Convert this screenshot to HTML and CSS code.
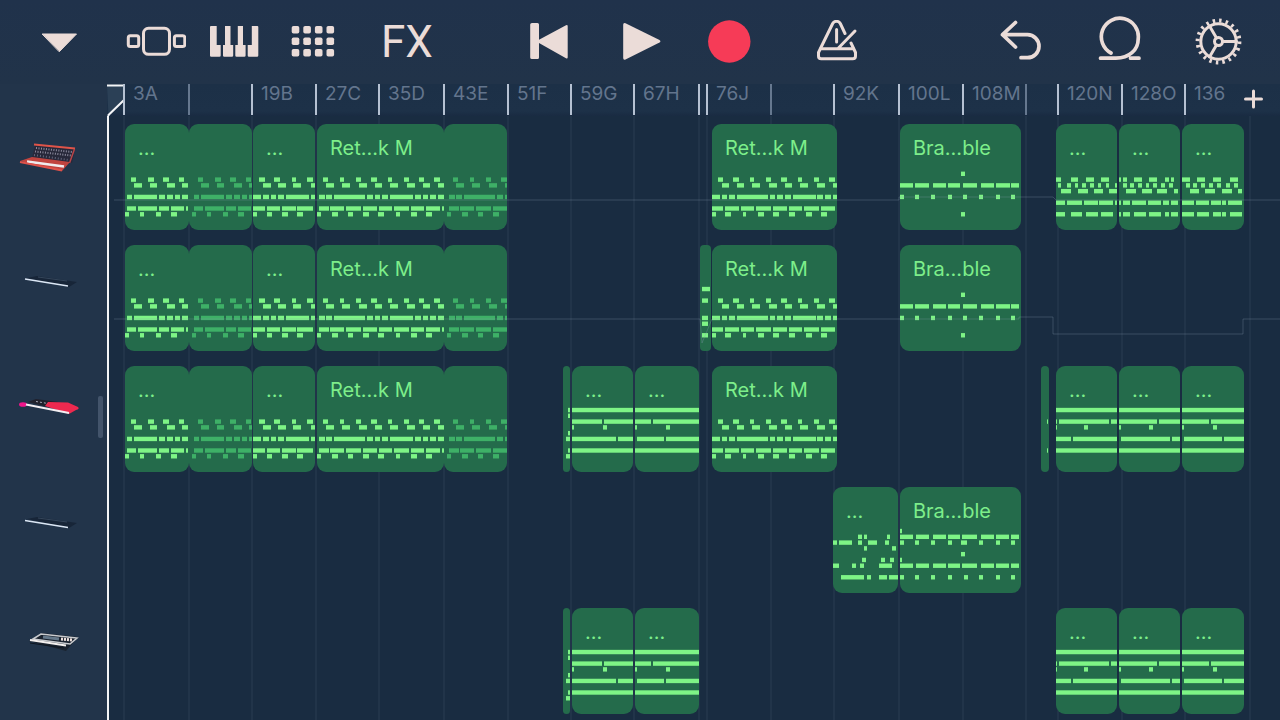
FILE: index.html
```html
<!DOCTYPE html>
<html lang="en">
<head>
<meta charset="utf-8">
<meta name="viewport" content="width=device-width, initial-scale=1">
<title>Song arranger</title>
<link rel="stylesheet" href="styles.css">
</head>
<body>
<div class="app">
  <header class="toolbar">
    <div class="group group-left">
      <button class="tool tool-menu" type="button" aria-label="Menu">
        <svg class="icon" width="40" height="44" viewBox="39 20 40 44"><path class="solid" d="M42.500 34h34l-17 17.500z"/></svg>
      </button>
      <button class="tool" type="button" aria-label="Rack">
        <svg class="icon" width="60" height="44" viewBox="126 20 60 44"><rect x="143.500" y="28.300" width="26" height="26" rx="5"/><rect x="128.300" y="35.800" width="10.400" height="10.800" rx="2"/><rect x="174.400" y="35.800" width="10.400" height="10.800" rx="2"/></svg>
      </button>
      <button class="tool" type="button" aria-label="Keyboard">
        <svg class="icon" width="50" height="44" viewBox="209 20 50 44"><g class="flat"><path d="M211 26h5.700v19h4v10.500q0 1.300-1.300 1.300h-8.100q-1.300 0-1.300-1.300V27q0-1 1-1z"/><path d="M225 26h5.500v19h2.700v10.500q0 1.300-1.300 1.300h-7.600q-1.300 0-1.300-1.300V45h2z"/><path d="M237.800 26h5.200v19h2.600v10.500q0 1.300-1.300 1.300h-7.700q-1.300 0-1.300-1.300V45h2.500z"/><path d="M251.800 26h5.500q1 0 1 1v28.500q0 1.300-1.300 1.300h-8q-1.300 0-1.300-1.300V45h4.100z"/></g></svg>
      </button>
      <button class="tool" type="button" aria-label="Pads">
        <svg class="icon" width="46" height="44" viewBox="289 20 46 44"><g class="flat" id="pads"></g></svg>
      </button>
      <button class="tool tool-fx" type="button">FX</button>
    </div>
    <div class="group group-transport">
      <button class="tool" type="button" aria-label="Return to start">
        <svg class="icon" width="44" height="44" viewBox="527 20 44 44"><path class="flat" d="M532 23h5.500q1.500 0 1.500 1.500v15.200l27-14.500q1.700-.7 1.700 1v31q0 1.700-1.700 1L539 42.900v14.600q0 1.500-1.500 1.500H532q-1.800 0-1.800-1.500v-33q0-1.500 1.800-1.500z"/></svg>
      </button>
      <button class="tool" type="button" aria-label="Play">
        <svg class="icon" width="44" height="44" viewBox="617 20 44 44"><path class="flat" d="M625.500 23.200l34 16.800q1.800 1.300 0 2.600l-34 17q-2.300.8-2.300-1.500V24.700q0-2.300 2.300-1.500z"/></svg>
      </button>
      <button class="tool" type="button" aria-label="Record">
        <svg class="icon" width="44" height="44" viewBox="707 20 44 44"><circle class="record" cx="729.300" cy="41.500" r="21.200"/></svg>
      </button>
      <button class="tool tool-metronome" type="button" aria-label="Metronome">
        <svg class="icon" width="44" height="44" viewBox="815 20 44 44"><path d="M845 33.500l-4.700-10q-1.200-2.200-3.800-2.200t-3.800 2.200L818.500 52.500v3.500q0 2.800 2.800 2.800h31.400q2.800 0 2.800-2.800v-3.500L851 43"/><path d="M820.500 48.800h33M836.600 29.500V42M855 31l-17 17.500"/></svg>
      </button>
    </div>
    <div class="group group-right">
      <button class="tool" type="button" aria-label="Undo">
        <svg class="icon icon-round" width="44" height="44" viewBox="999 20 44 44"><path d="M1015.500 22.500L1002.500 34.700l13 12.300M1003 34.700h24.500a11.500 11.500 0 0 1 0 23h-6.500"/></svg>
      </button>
      <button class="tool" type="button" aria-label="Loop">
        <svg class="icon icon-round" width="44" height="52" viewBox="1097 16 44 52"><path d="M1111 53A18.500 18.500 0 1 1 1138.200 39C1138.200 50 1129 58.200 1116 58.200H1100.500M1130.500 58.200h8.500"/></svg>
      </button>
      <button class="tool" type="button" aria-label="Settings">
        <svg class="icon" width="50" height="48" viewBox="1192 18 50 48"><circle cx="1218.500" cy="41.500" r="17.700"/><circle class="teeth" cx="1218.500" cy="41.500" r="20.900"/><circle cx="1218.500" cy="41.500" r="4"/><path d="M1222.500 41.500h14M1216.500 38l-7-12M1216.500 45l-7 12"/></svg>
      </button>
    </div>
  </header>

  <aside class="instruments" aria-label="Instruments">
    <button class="instrument" type="button" aria-label="Modular synthesizer">
      <svg width="70" height="64" viewBox="15 126 70 64"><path fill="#27283a" d="M35 145l40 4-3 14-40-5z"/><path stroke="#df5449" stroke-width="2" d="M34 144.500l41 4"/><path stroke="#b8464a" stroke-width="1.500" d="M74.500 149l-5 14"/><path stroke="#8c8b9e" stroke-width="2" stroke-dasharray="1 1.500" d="M36 148l36 4M35 151.500l36 4"/><path stroke="#62667c" stroke-width="2" stroke-dasharray="1 2" d="M34 155l35 5"/><path fill="#c1443f" d="M20 161l12-4 38 5-8 9z"/><path stroke="#efebed" stroke-width="2.500" d="M27 161.500l37 5"/><path stroke="#df514a" stroke-width="2" d="M20 162l42 8.500"/></svg>
    </button>
    <button class="instrument" type="button" aria-label="Slim keyboard 1">
      <svg width="70" height="64" viewBox="15 247 70 64"><path fill="#172538" d="M27 278l10-2 40 6-8 5z"/><path stroke="#dce7f5" stroke-width="1.500" d="M25 279l43 7"/><path stroke="#34455a" d="M38 277l29 4"/></svg>
    </button>
    <button class="instrument" type="button" aria-label="Red stage keyboard">
      <svg width="70" height="64" viewBox="15 368 70 64"><path fill="#20212c" d="M28 402l8-3 22 3-6 6z"/><path fill="#ed294f" d="M48 402l20 .5 10 4.500q2 2-2 3l-7 4-24-8z"/><ellipse fill="#ef168b" cx="23" cy="404.500" rx="4" ry="2.300"/><path stroke="#f4eff2" stroke-width="2" d="M26 404.500l43 8.500"/><path stroke="#a5a7b4" stroke-dasharray="2 2" d="M36 401.500l12 2"/></svg>
    </button>
    <button class="instrument" type="button" aria-label="Slim keyboard 2">
      <svg width="70" height="64" viewBox="15 489 70 64"><path fill="#172538" d="M27 519l10-2 40 6-8 5z"/><path stroke="#dce7f5" stroke-width="1.500" d="M25 520.500l43 7"/><path stroke="#34455a" d="M38 518l29 4"/></svg>
    </button>
    <button class="instrument" type="button" aria-label="Workstation">
      <svg width="70" height="64" viewBox="15 610 70 64"><path fill="#1a222e" d="M29 641l13-8 36 4-12 14z"/><path stroke="#c9cbcf" stroke-width="1.500" fill="none" d="M33 639l8-5 36 4-7 6z"/><path stroke="#65788a" stroke-width="3" d="M43 637l16 2"/><path stroke="#efe2df" stroke-width="3" stroke-dasharray="2 1" d="M61 639l12 1"/><path stroke="#f3efee" stroke-width="2" d="M30 640l36 5.500"/><path stroke="#0e1621" d="M30 643l34 5"/></svg>
    </button>
    <div class="scroll-handle"></div>
  </aside>

  <div class="ruler" id="ruler">
    <svg class="playhead" width="18" height="32" viewBox="0 0 18 32"><path d="M0 1.500H17V16L1.500 31V32"/></svg>
  </div>

  <main class="lanes" id="lanes">
    <svg class="gridlines" id="gridlines" width="100%" height="100%"></svg>
    <svg class="automation" width="100%" height="100%"><path d="M5 84H790V81H944L947 84H1400M5 203H591L593 227L603 203H910V201H944V218H1134V203H1400"/></svg>
  </main>
</div>
<script src="script.js"></script>
</body>
</html>
```
FILE: styles.css
```css
* {
  box-sizing: border-box;
}

body {
  margin: 0;
  background: #192c41;
  font-family: Inter, "Liberation Sans", sans-serif;
}

button {
  padding: 0;
  border: 0;
  background: none;
  font: inherit;
  cursor: pointer;
}

.app {
  display: grid;
  grid-template-columns: 107px 1fr;
  grid-template-rows: 84px 32px 1fr;
  height: 100vh;
  overflow: hidden;
}

.toolbar {
  grid-column: 1 / -1;
  display: flex;
  padding: 0 14px 0 20px;
  background: linear-gradient(#20324b, #213349);
}

.group {
  display: flex;
}

.group-left {
  margin-right: 41px;
}

.group-right {
  margin-left: auto;
}

.tool {
  display: flex;
  align-items: center;
  justify-content: center;
  width: 78px;
  color: #ebdcd8;
}

.tool-menu {
  margin-right: 19px;
}

.tool-fx {
  width: 112px;
  font-family: Roboto, sans-serif;
  font-size: 44px;
  font-weight: 400;
}

.group-transport .tool {
  width: 90px;
}

.group-transport .tool-metronome {
  width: 126px;
}

.group-right .tool {
  width: 98px;
}

.icon {
  fill: none;
  stroke: #ebdcd8;
  stroke-width: 3;
  stroke-linejoin: round;
  stroke-linecap: round;
}

.icon-round {
  stroke-width: 3.700;
}

.icon .solid {
  fill: #ebdcd8;
  stroke-width: 1;
}

.icon .flat {
  fill: #ebdcd8;
  stroke: none;
}

.icon .record {
  fill: #f63b57;
  stroke: none;
}

.icon .teeth {
  stroke-width: 4;
  stroke-linecap: butt;
  stroke-dasharray: 2.500 4.066;
}

.instruments {
  position: relative;
  grid-row: 2 / 4;
  display: flex;
  flex-direction: column;
  padding-top: 32px;
  background: #22344a;
}

.instrument {
  display: flex;
  flex: 0 0 121px;
  align-items: flex-start;
  padding: 10px 0 0 15px;
}

.scroll-handle {
  position: absolute;
  top: 312px;
  right: 4px;
  width: 5px;
  height: 42px;
  border-radius: 2px;
  background: #43546b;
}

.ruler {
  display: flex;
  min-width: 0;
  background: linear-gradient(#1c3047, #1d3148 27px, #192b42);
}

.playhead {
  flex: none;
  margin-right: -2px;
  fill: #2b4056;
  stroke: #f4f5f7;
  stroke-width: 2;
}

.marker {
  flex: none;
  height: 31px;
  border-left: 2px solid #b5c1d2;
  color: #63758d;
  font-size: 19px;
  line-height: 20px;
  text-indent: 8px;
  white-space: nowrap;
}

.marker-dim {
  border-left-color: #66788f;
}

.add-section {
  flex: none;
  width: 24px;
  height: 30px;
}

.lanes {
  position: relative;
  overflow: hidden;
  border-left: 2px solid #f4f5f7;
  background: #192c41;
}

.gridlines,
.automation {
  position: absolute;
  top: 0;
  left: 0;
}

.gridlines {
  stroke: #213449;
  stroke-width: 2;
}

.automation {
  z-index: 2;
  fill: none;
  stroke: #8499ae;
  stroke-opacity: 0.3;
  pointer-events: none;
}

.lane {
  position: relative;
  z-index: 1;
  display: flex;
  height: 121px;
  padding-top: 8px;
}

.clip {
  position: relative;
  flex: none;
  height: 106px;
  overflow: hidden;
  border-radius: 9px;
  background: #246b4b;
}

.clip-thin {
  border-radius: 4px;
}

.clip-title {
  display: block;
  padding: 12px 0 0 13px;
  color: #7dee8a;
  font-size: 20px;
  line-height: 25px;
  white-space: nowrap;
}

.notes {
  position: absolute;
  top: 0;
  left: 0;
  fill: #7ef486;
}

.clip-repeat .notes {
  fill: #3eb067;
}
```
FILE: script.js
```js
const SVG = 'http://www.w3.org/2000/svg';

// Section markers: position on the page, label.
const markers = [
  [123, '3A'], [188, '', true], [251, '19B'], [315, '27C'], [378, '35D'],
  [443, '43E'], [507, '51F'], [570, '59G'], [633, '67H'], [698, ''],
  [706, '76J'], [770, '', true], [833, '92K'], [898, '100L'], [962, '108M'],
  [1025, '', true], [1057, '120N'], [1121, '128O'], [1184, '136'], [1242, null]
];

// Note patterns: pitch row -> "start-end" pairs inside the clip.
const patterns = {
  retroA: {
    0: '6-11 23-29 38-44 54-59',
    1: '9-17 25-32 42-50 57-63',
    3: '2-7 9-32 34-40 42-48 50-55 57-63',
    5: '2-11 13-32 34-44 46-59 61-63',
    6: '0-4 15-19 31-36 46-52'
  },
  retroB: {
    0: '6-12 21-27 39-43 54-60',
    1: '10-18 25-33 40-48 58-62',
    3: '0-8 10-16 18-23 25-31 33-56 58-62',
    5: '0-12 14-27 29-43 44-60',
    6: '0-4 14-19 29-35 44-50'
  },
  retroC: {
    0: '6-11 23-27 39-44 54-60 71-75 87-92 102-107 117-123',
    1: '9-17 25-33 42-50 58-65 73-81 90-98 106-113 121-127',
    3: '2-8 9-15 17-48 50-56 58-63 65-71 73-96 98-104 106-111 113-119 121-127',
    5: '2-12 13-27 29-44 46-60 62-75 77-92 94-107 109-123 125-127',
    6: '0-4 15-21 31-36 46-52 61-67 79-83 94-100 109-115'
  },
  retroJ: {
    0: '6-11 21-27 38-42 54-59 69-75 86-90 102-107 117-123',
    1: '10-17 25-32 40-48 57-65 73-80 88-96 105-113 121-125',
    3: '0-8 10-15 17-23 25-56 58-63 65-71 73-79 81-104 105-111 113-119 121-125',
    5: '0-11 13-27 29-42 44-59 61-75 77-90 92-107 109-123',
    6: '0-4 13-19 31-34 46-52 61-67 77-83 94-100 109-115'
  },
  brass: {
    '-1': '61-65',
    1: '0-13 15-29 33-46 48-60 63-77 81-94 96-110 111-119',
    3: '0-4 15-19 31-35 48-52 63-67 79-83 96-100 111-115',
    6: '61-65'
  },
  brassFull: {
    '-2': '0-2',
    '-1': '0-13 16-29 33-46 48-60 62-77 81-94 96-109 111-119',
    0: '0-4 15-19 31-35 48-52 61-67 79-83 96-100 111-115',
    2: '61-65',
    3: '0-2',
    4: '0-13 16-29 33-46 48-60 62-77 81-94 96-109 111-119',
    6: '0-4 15-19 31-35 48-52 64-68 79-83 96-100 111-115'
  },
  fill: {
    '-1': '25-29 31-34 54-57',
    0: '0-4 6-19 25-29 35-44 52-56',
    1: '31-34 59-63',
    3: '29-33 48-52 57-61',
    4: '0-6 19-23 27-31 46-59',
    6: '8-31 34-38 46-54 56-65'
  },
  arpA: {
    0: '0-5 15-22 30-38 45-53',
    1: '2-5 11-15 19-22 26-30 34-38 42-45 50-53 59-61',
    2: '5-15 22-32 38-47 53-61',
    4: '0-9 11-26 28-42 43-57 59-61',
    6: '0-9 15-26 30-42 45-57'
  },
  arpB: {
    0: '0-2 4-8 15-23 30-38 46-50 52-55',
    1: '4-8 11-15 19-23 27-30 34-38 42-46 50-54',
    2: '7-17 23-33 38-48 55-59',
    4: '0-2 4-11 13-27 29-42 44-50 52-59',
    6: '0-2 4-11 15-27 30-42 46-50 52-59'
  },
  arpC: {
    0: '0-8 15-23 31-39 48-56',
    1: '4-8 11-15 19-23 27-31 35-39 44-48 52-56',
    2: '8-17 23-33 40-50 56-60',
    4: '0-12 14-27 29-39 40-44 46-60',
    6: '0-12 15-27 31-39 40-44 48-60'
  },
  padLead: { '-2': '5-7', '-1': '5-7', 2: '5-7', 3: '3-7', 5: '5-7', 6: '3-7' },
  padG: { '-2': '0-62', 0: '0-30 32-62', 1: '0-2 31-35', 3: '0-44 46-62', 5: '0-62' },
  padH: { '-2': '0-64', 0: '0-16 18-64', 1: '0-2 31-35', 3: '2-29 31-64', 5: '0-64' },
  padN: { '-2': '0-61', 0: '0-1 3-53 55-61', 1: '0-1 28-32', 3: '0-15 17-61', 5: '0-61' },
  padO: { '-2': '0-61', 0: '0-38 40-61', 1: '0-2 30-34', 3: '2-51 53-61', 5: '0-61' },
  padP: { '-2': '0-62', 0: '0-27 29-62', 1: '0-2 31-35', 3: '2-40 42-62', 5: '0-62' },
  pickup: { '-2': '2-10', 0: '2-8', 3: '2-8', 4: '2-8', 6: '2-8' },
  tick: { 0: '6-7', 5: '6-7' }
};

// Clips: start, end, title, pattern, and whether it is a loop repeat.
const retro = [
  [125, 189, '...', 'retroA'], [189, 252, '', 'retroA', true],
  [253, 315, '...', 'retroB'],
  [317, 444, 'Ret...k M', 'retroC'], [444, 507, '', 'retroC', true]
];
const verse = [712, 837, 'Ret...k M', 'retroJ'];
const brass = [900, 1021, 'Bra...ble', 'brass'];
const pads = [[563, 570, '', 'padLead'], [572, 633, '...', 'padG'], [635, 699, '...', 'padH']];
const outro = [[1056, 1117, '...', 'padN'], [1119, 1180, '...', 'padO'], [1182, 1244, '...', 'padP']];
const lanes = [
  [...retro, verse, brass, [1056, 1117, '...', 'arpA'], [1119, 1180, '...', 'arpB'], [1182, 1244, '...', 'arpC']],
  [...retro, [700, 711, '', 'pickup'], verse, brass],
  [...retro, ...pads, verse, [1041, 1049, '', 'tick'], ...outro],
  [[833, 898, '...', 'fill'], [900, 1021, 'Bra...ble', 'brassFull']],
  [...pads, ...outro]
];

const LANE_START = 109;

function rect(parent, x, y, width, height, radius) {
  const el = document.createElementNS(SVG, 'rect');
  Object.entries({ x, y, width, height, rx: radius || 0 }).forEach(([k, v]) => el.setAttribute(k, v));
  parent.append(el);
}

function drawNotes(name, width, shift) {
  const svg = document.createElementNS(SVG, 'svg');
  svg.setAttribute('class', 'notes');
  svg.setAttribute('width', width);
  svg.setAttribute('height', 106);
  for (const [row, spans] of Object.entries(patterns[name])) {
    const y = 53.4 + row * 5.78;
    for (const span of spans.split(' ')) {
      const [from, to] = span.split('-').map(Number);
      rect(svg, from + shift, y, to - from, 4.4);
    }
  }
  return svg;
}

const laneRoot = document.getElementById('lanes');
for (const clips of lanes) {
  const lane = document.createElement('section');
  lane.className = 'lane';
  let cursor = LANE_START;
  for (const [start, end, title, pattern, repeat] of clips) {
    const clip = document.createElement('div');
    clip.className = 'clip' + (repeat ? ' clip-repeat' : '') + (end - start < 15 ? ' clip-thin' : '');
    clip.style.marginLeft = start - cursor + 'px';
    clip.style.width = end - start + 'px';
    if (title) {
      const label = document.createElement('span');
      label.className = 'clip-title';
      label.textContent = title;
      clip.append(label);
    }
    clip.append(drawNotes(pattern, end - start, repeat ? 3 : 0));
    lane.append(clip);
    cursor = end;
  }
  laneRoot.append(lane);
}

const ruler = document.getElementById('ruler');
const grid = document.getElementById('gridlines');
markers.forEach(([x, label, dim], i) => {
  const lineX = (label === null ? 1249 : x) + 1 - LANE_START;
  const line = document.createElementNS(SVG, 'path');
  line.setAttribute('d', `M${lineX} 0V2000`);
  grid.append(line);
  if (label === null) return;
  const marker = document.createElement('div');
  marker.className = 'marker' + (dim ? ' marker-dim' : '');
  marker.style.width = markers[i + 1][0] - x + 'px';
  marker.textContent = label;
  ruler.append(marker);
});
ruler.insertAdjacentHTML('beforeend',
  '<button class="add-section" type="button" aria-label="Add section">' +
  '<svg class="icon" width="24" height="30" viewBox="0 0 24 30"><path d="M3.500 15h16M11.500 7v16"/></svg></button>');

const padGroup = document.getElementById('pads');
for (let row = 0; row < 3; row++) {
  for (let col = 0; col < 4; col++) rect(padGroup, 291.7 + col * 11.6, 26 + row * 11.5, 7.6, 7.6, 1.8);
}
```
